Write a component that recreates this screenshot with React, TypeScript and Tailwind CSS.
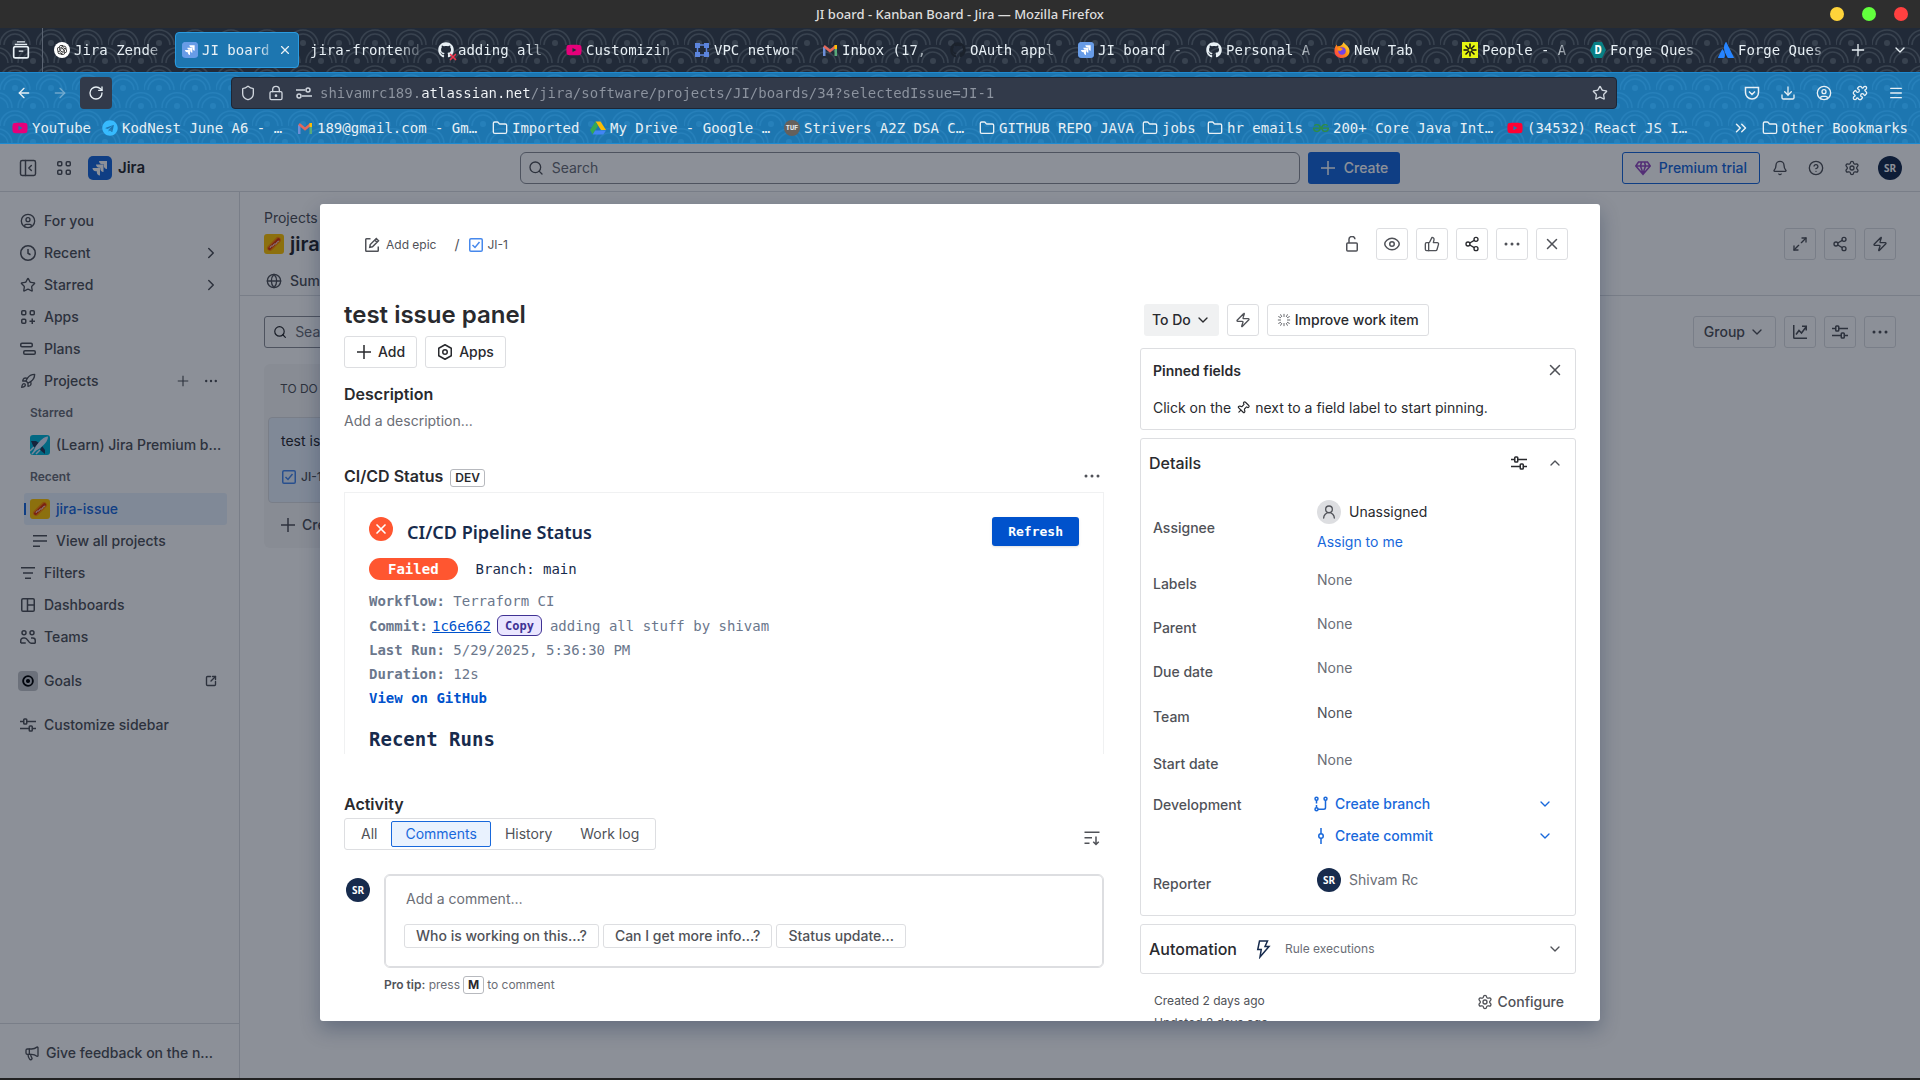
import React from 'react';
import {
  ArrowLeft, ArrowRight, Bell, ChevronDown, ChevronRight, ChevronUp, ChevronsRight, CircleHelp, CircleUser,
  Download, Folder, Globe, LockKeyhole, Maximize2, Megaphone, Menu, PanelLeftClose,
  Pin, Puzzle, Rocket, RotateCw, Search, Settings, Share2, Shield, SquareArrowOutUpRight, Star,
  ThumbsUp, UserRound, X, Zap,
} from 'lucide-react';
import { FaAtlassian, FaGithub, FaTelegram, FaYoutube } from 'react-icons/fa';
import { RiOpenaiFill } from 'react-icons/ri';
import { SiGeeksforgeeks } from 'react-icons/si';

/* ---------- Icons ---------- */

const Glyph = ({ className = 'size-4', children }: { className?: string; children: React.ReactNode }) => (
  <svg viewBox="0 0 16 16" className={`shrink-0 ${className}`} fill="none" stroke="currentColor" strokeWidth={1.5} aria-hidden="true">
    {children}
  </svg>
);

const PlusIcon = ({ className = 'size-4' }: { className?: string }) => (
  <Glyph className={className}><path d="M8 1v14M1 8h14" /></Glyph>
);

const DotsIcon = () => (
  <Glyph>
    <g fill="currentColor" stroke="none">
      <circle cx="2" cy="8" r="1.5" />
      <circle cx="8" cy="8" r="1.5" />
      <circle cx="14" cy="8" r="1.5" />
    </g>
  </Glyph>
);

const GridIcon = ({ plus = false }) => (
  <Glyph>
    <rect x="1.75" y="1.75" width="4" height="4" rx="1" />
    <rect x="10.25" y="1.75" width="4" height="4" rx="1" />
    <rect x="1.75" y="10.25" width="4" height="4" rx="1" />
    {plus ? <path d="M12.25 9.5v5.5M9.5 12.25H15" /> : <rect x="10.25" y="10.25" width="4" height="4" rx="1" />}
  </Glyph>
);

const ClockIcon = () => (
  <Glyph>
    <circle cx="8" cy="8" r="7.25" />
    <path d="M8 4v4.25l2.5 1.5" />
  </Glyph>
);

const PlansIcon = () => (
  <Glyph>
    <rect x="0.75" y="2.25" width="11.5" height="3.5" rx="1.25" />
    <rect x="3.75" y="9.75" width="11.5" height="3.5" rx="1.25" />
  </Glyph>
);

const FilterIcon = () => (
  <Glyph><path d="M1 2.75h14M3 8h10M5 13.25h6" /></Glyph>
);

const ListIcon = () => (
  <Glyph><path d="M1 2.75h14M1 8h14M1 13.25h7" /></Glyph>
);

const DashboardIcon = () => (
  <Glyph>
    <rect x="1.75" y="1.75" width="12.5" height="12.5" rx="1.25" />
    <path d="M7.5 1.75v12.5M7.5 8h6.75" />
  </Glyph>
);

const TeamsIcon = () => (
  <Glyph>
    <circle cx="4" cy="3.75" r="2" />
    <circle cx="12" cy="3.75" r="2" />
    <path d="M.75 14v-2.5A2.5 2.5 0 0 1 3.25 9h1.5c3 0 3.5 5.25 6.25 5.25h3a1 1 0 0 0 1.25-1.25v-1.5A2.5 2.5 0 0 0 12.75 9H11M.75 14h5" />
  </Glyph>
);

const CustomizeIcon = () => (
  <Glyph>
    <path d="M0 4.5h3.5M7 4.5h9M0 11.5h9M12.5 11.5H16" />
    <rect x="3.75" y="2" width="3" height="5" rx=".75" />
    <rect x="9.25" y="9" width="3" height="5" rx=".75" />
  </Glyph>
);

const TaskIcon = () => (
  <Glyph className="size-4 text-[#4688ec]">
    <rect x="1.75" y="1.75" width="12.5" height="12.5" rx="1.25" />
    <path d="m4.5 8 2.5 2.5L11.5 5" />
  </Glyph>
);

const EditIcon = () => (
  <Glyph>
    <path d="M6.5 1.75h-4a.75.75 0 0 0-.75.75v11c0 .4.35.75.75.75h11c.4 0 .75-.35.75-.75v-4" />
    <path d="m5.75 10.25.5-2.75 6-6 2.25 2.25-6 6zM10.75 3l2.25 2.25" />
  </Glyph>
);

const UnlockIcon = () => (
  <Glyph>
    <rect x="2.75" y="7" width="10.5" height="8" rx="1" />
    <path d="M5 7V3.75a3 3 0 0 1 6-.5" />
  </Glyph>
);

const WatchIcon = () => (
  <Glyph>
    <path d="M8 2.25c4 0 7.25 3.5 7.25 5.75S12 13.75 8 13.75.75 10.25.75 8 4 2.25 8 2.25Z" />
    <circle cx="8" cy="8" r="2.25" />
  </Glyph>
);

const ChartIcon = () => (
  <Glyph><path d="M1.75 1v12.5c0 .4.35.75.75.75H15M4 10.5l3-4 2.5 2.5L14 3M10 2.25h4.25V6.5" /></Glyph>
);

const SparkleIcon = () => (
  <Glyph className="size-3.5 text-[#505258]">
    <path d="M8 1v3.5M8 11.5V15M1 8h3.500M11.500 8H15M4 1.500l1.500 3M12 1.500l-1.500 3M4 14.500l1.500-3M12 14.500l-1.500-3M1.500 4l3 1.500M14.500 4l-3 1.500M1.500 12l3-1.500M14.500 12l-3-1.500" strokeWidth="1" />
  </Glyph>
);

const SortIcon = () => (
  <Glyph><path d="M.5 2.25h15M.5 7.75h7.5M.5 13.25h5M12 6.5v8M9.25 11.75 12 14.5l2.75-2.75" /></Glyph>
);

const BranchIcon = () => (
  <Glyph>
    <circle cx="3.5" cy="2.75" r="1.5" />
    <circle cx="12.5" cy="2.75" r="1.5" />
    <circle cx="3.5" cy="13.25" r="1.5" />
    <path d="M3.5 4.25v3.25M3.5 9v2.5M12.5 4.25v7.25c0 1-.75 1.75-1.75 1.75H5" />
  </Glyph>
);

const CommitIcon = () => (
  <Glyph>
    <circle cx="8" cy="8" r="2.25" />
    <path d="M8 0v5.75M8 10.25V16" />
  </Glyph>
);

const AutomationIcon = () => (
  <Glyph className="h-5 w-4 text-[#172b4d]">
    <path d="M4.5 0h8L10 5.5h4L5 16l1.25-7.5H2.75z" />
  </Glyph>
);

const JiraMark = ({ className }: { className: string }) => (
  <svg viewBox="0 0 24 24" className={`shrink-0 ${className}`} aria-hidden="true">
    <rect width="24" height="24" rx="5" fill="#1868db" />
    <path fill="#fff" d="M11 5h8v8c-1.900 0-3.200-1.400-3.200-3.200V8.200h-1.600C12.400 8.200 11 6.900 11 5Z" />
    <path fill="#fff" d="M8 8.500h7.500v7.500c-1.900 0-3.200-1.400-3.200-3.200v-1.100h-1.100C9.400 11.700 8 10.400 8 8.500Z" />
    <path fill="#fff" d="M4.500 12H12v7.500c-1.900 0-3.200-1.400-3.200-3.200v-1.100H7.700c-1.800 0-3.200-1.300-3.200-3.200Z" />
  </svg>
);

const TabJiraMark = () => (
  <span className="size-4 shrink-0 rounded bg-white">
    <JiraMark className="size-4 opacity-65" />
  </span>
);

const HotdogAvatar = () => (
  <svg viewBox="0 0 20 20" className="size-5 shrink-0" aria-hidden="true">
    <rect width="20" height="20" rx="3" fill="#ffc400" />
    <path d="M6 14 14 6" stroke="#ff8b00" strokeWidth="6" strokeLinecap="round" />
    <path d="M5.500 14.500 14.500 5.500" stroke="#de350b" strokeWidth="3" strokeLinecap="round" />
    <path d="m6 14 1-2 2 0 1-2 2 0 1-2 2-1" stroke="#fff" strokeWidth=".8" fill="none" />
  </svg>
);

const RocketAvatar = () => (
  <svg viewBox="0 0 20 20" className="size-5 shrink-0" aria-hidden="true">
    <rect width="20" height="20" rx="3" fill="#00b8d9" />
    <path d="M1 6h5l3 2-5 5zM12 11l3 4v4l-5-4z" fill="#253858" />
    <path d="M18 1.500c-4 0-8 4-12 9.500l-3 6 6-3c5-4 9-8 9-12.500Z" fill="#deebff" />
    <path d="M2 19 11 9M0 16l4-4M6 19l4-4" stroke="#deebff" strokeWidth="1.500" />
  </svg>
);

const GmailIcon = () => (
  <svg viewBox="0 0 16 16" className="size-4 shrink-0" fill="none" strokeWidth="2.500" aria-hidden="true">
    <path d="M2.250 14V5" stroke="#6c8fd8" />
    <path d="M13.750 14V5" stroke="#58a97a" />
    <path d="m2 4 6 5 6-5" stroke="#e2685c" />
    <path d="M13.750 7V3" stroke="#fbbc04" />
  </svg>
);

const DriveIcon = () => (
  <svg viewBox="0 0 16 16" className="size-4 shrink-0" aria-hidden="true">
    <path d="M5.500 1.500h5L16 10h-5z" fill="#fbbc04" />
    <path d="M5.500 1.500 8 6 2.700 14.500 0 10z" fill="#34a853" />
    <path d="M5.200 10.500H16L13.300 14.500H2.700z" fill="#4285f4" />
  </svg>
);

const VpcIcon = () => (
  <svg viewBox="0 0 16 16" className="size-4 shrink-0" fill="#5c85de" aria-hidden="true">
    <path d="M1 1h5v5H1zM10 1h5v5h-5zM1 10h5v5H1zM10 10h5v5h-5z" />
    <path d="M6 3h4M6 13h4M3.500 6v4M12.500 6v4" stroke="#5c85de" strokeWidth="1.500" />
  </svg>
);

const PeopleIcon = () => (
  <svg viewBox="0 0 16 16" className="size-4 shrink-0" aria-hidden="true">
    <rect width="16" height="16" fill="#e6f512" />
    <path d="M8 1.500v13M1.500 8h13M3.500 3.500l9 9M12.500 3.500l-9 9" stroke="#111" strokeWidth="1.500" />
    <circle cx="8" cy="8" r="1.500" fill="#e6f512" />
  </svg>
);

const FirefoxIcon = () => (
  <svg viewBox="0 0 16 16" className="size-4 shrink-0" aria-hidden="true">
    <defs>
      <linearGradient id="fox" x1="1" y1="0" x2="0" y2="1">
        <stop offset="0" stopColor="#fff44f" />
        <stop offset=".45" stopColor="#ff980e" />
        <stop offset="1" stopColor="#ff2a55" />
      </linearGradient>
    </defs>
    <path d="M9.500 0c.5 2 4 3 5.500 6.500C17 12 13 16 8 16S0 12.500.5 8C.7 5.500 1.500 4 2.500 2.500L3.500 4.500C5 4 8 4.500 9.500 0Z" fill="url(#fox)" />
    <circle cx="8" cy="9" r="3.750" fill="#7542e5" />
    <path d="M3.500 6.500c2-1.500 4 0 5.500.5L6.500 9 4 8.500z" fill="#ff980e" />
  </svg>
);

const ForgeIcon = () => (
  <span className="flex size-4 shrink-0 items-center justify-center bg-[#088085] text-xs font-bold text-white [clip-path:polygon(25%_0,75%_0,100%_50%,75%_100%,25%_100%,0_50%)]">D</span>
);

const FailedGithub = () => (
  <span className="relative shrink-0">
    <FaGithub className="size-4" />
    <X className="absolute -right-1 -bottom-1 size-2.5 text-[#f0364d]" strokeWidth={4} />
  </span>
);

const OpenAi = () => (
  <span className="flex size-4 shrink-0 items-center justify-center rounded-full bg-white text-black">
    <RiOpenaiFill className="size-3" />
  </span>
);

// Overlapping wave arcs painted behind the browser toolbar
const Waves = ({ id, className }: { id: string; className: string }) => (
  <svg className={`pointer-events-none absolute inset-0 size-full ${className}`} aria-hidden="true">
    <defs>
      <pattern id={id} width="36" height="36" patternUnits="userSpaceOnUse">
        <g fill="none" stroke="currentColor" strokeWidth="1.500">
          <path d="M0 17a15 15 0 0 1 30 0M4 17a11 11 0 0 1 22 0" />
          <path d="M18 35a15 15 0 0 1 18-15M22 35a11 11 0 0 1 14-10.500M0 20a15 15 0 0 1 12 15M0 24.500a11 11 0 0 1 8 10.500" />
        </g>
        <circle cx="15" cy="15" r="3" fill="currentColor" />
        <circle cx="33" cy="33" r="3" fill="currentColor" />
      </pattern>
    </defs>
    <rect width="100%" height="100%" fill={`url(#${id})`} />
  </svg>
);

/* ---------- Browser chrome ---------- */

const tabs = [
  { title: 'Jira Zende', icon: <OpenAi /> },
  { title: 'JI board', icon: <TabJiraMark />, active: true },
  { title: 'jira-frontend', icon: null },
  { title: 'adding all', icon: <FailedGithub /> },
  { title: 'Customizin', icon: <FaYoutube className="size-4 shrink-0 text-[#e6007a]" /> },
  { title: 'VPC networ', icon: <VpcIcon /> },
  { title: 'Inbox (17,', icon: <GmailIcon /> },
  { title: 'OAuth appl', icon: <FaGithub className="size-4 shrink-0 text-[#1b222c]" /> },
  { title: 'JI board -', icon: <TabJiraMark /> },
  { title: 'Personal A', icon: <FaGithub className="size-4 shrink-0" /> },
  { title: 'New Tab', icon: <FirefoxIcon /> },
  { title: 'People - A', icon: <PeopleIcon /> },
  { title: 'Forge Ques', icon: <ForgeIcon /> },
  { title: 'Forge Ques', icon: <FaAtlassian className="size-4 shrink-0 text-[#2684ff]" /> },
];

const bookmarks = [
  { title: 'YouTube', width: 'w-[90px]', icon: <FaYoutube className="size-4 shrink-0 text-[#e6007a]" /> },
  { title: 'KodNest June A6 - …', width: 'w-[195px]', icon: <FaTelegram className="size-4 shrink-0 text-[#37bbfe]" /> },
  { title: '189@gmail.com - Gm…', width: 'w-[195px]', icon: <GmailIcon /> },
  { title: 'Imported', width: 'w-[98px]', icon: <Folder className="size-4 shrink-0" /> },
  { title: 'My Drive - Google …', width: 'w-[194px]', icon: <DriveIcon /> },
  { title: 'Strivers A2Z DSA C…', width: 'w-[195px]', icon: <span className="flex size-4 shrink-0 items-center justify-center rounded-full bg-[#66605c] text-[7px] font-bold">TUF</span> },
  { title: 'GITHUB REPO JAVA', width: 'w-[163px]', icon: <Folder className="size-4 shrink-0" /> },
  { title: 'jobs', width: 'w-[65px]', icon: <Folder className="size-4 shrink-0" /> },
  { title: 'hr emails', width: 'w-[106px]', icon: <Folder className="size-4 shrink-0" /> },
  { title: '200+ Core Java Int…', width: 'w-[194px]', icon: <SiGeeksforgeeks className="size-4 shrink-0 text-[#2f8d46]" /> },
  { title: '(34532) React JS I…', width: 'w-[195px]', icon: <FaYoutube className="size-4 shrink-0 text-[#ff0033]" /> },
];

const BrowserChrome = () => (
  <header className="shrink-0 font-['DejaVu_Sans_Mono',monospace] text-sm text-[#e8f0f5]">
    {/* Title bar */}
    <div className="flex h-7 items-center bg-[#2e2e2e] px-3 font-['Noto_Sans',sans-serif] text-[13px] font-medium text-[#dedede]">
      <div className="flex-1" />
      <span>JI board - Kanban Board - Jira — Mozilla Firefox</span>
      <div className="flex flex-1 justify-end gap-[18px]">
        <button aria-label="Minimize" className="size-3.5 rounded-full bg-[#ffd43a]" />
        <button aria-label="Maximize" className="size-3.5 rounded-full bg-[#62ff3d]" />
        <button aria-label="Close window" className="size-3.5 rounded-full bg-[#ff4040]" />
      </div>
    </div>

    {/* Tabs */}
    <div className="relative flex h-11 items-center bg-[#212a38]">
      <Waves id="waves-tabs" className="text-[#38424f]" />
      <button aria-label="Tab history" className="relative flex h-full w-[43px] shrink-0 items-center justify-center border-r border-[#5b6472]">
        <Glyph className="size-[18px]">
          <rect x="1.500" y="5" width="13" height="10" rx="1.500" />
          <path d="M2.500 3h11M4.500 .75h7M6 9h4" strokeWidth="1.250" />
        </Glyph>
      </button>
      <div className="relative ml-1 flex min-w-0">
        {tabs.map((tab, i) => (
          <div
            key={i}
            className={`mr-1 flex h-9 w-[124px] min-w-0 items-center gap-1 rounded-sm border px-1.5 ${tab.active ? 'border-[#2a9be0] bg-[#1d76b0]' : 'border-transparent'}`}
          >
            {tab.icon}
            <span className="flex-1 whitespace-nowrap [mask-image:linear-gradient(to_right,black_80%,transparent_105%)]">{tab.title}</span>
            {tab.active && <button aria-label="Close tab"><X className="size-3.5" /></button>}
          </div>
        ))}
      </div>
      <button aria-label="New tab" className="relative ml-3"><PlusIcon className="size-3.5" /></button>
      <button aria-label="List all tabs" className="relative mr-3 ml-auto"><ChevronDown className="size-4" /></button>
    </div>

    {/* Navigation and bookmarks */}
    <div className="relative h-[72px] border-y border-[#1e8ad0] bg-[#1d76b0]">
      <Waves id="waves-nav" className="text-[#2680ba]" />
      <div className="relative flex h-10 items-center pr-4">
        <button aria-label="Back" className="ml-4"><ArrowLeft className="size-4" /></button>
        <button aria-label="Forward" className="ml-5 opacity-40"><ArrowRight className="size-4" /></button>
        <button aria-label="Reload" className="ml-3 flex size-8 items-center justify-center rounded-sm bg-[#323a4a]"><RotateCw className="size-4" /></button>
        <div className="ml-[119px] flex h-8 flex-1 items-center gap-3 rounded-sm border border-[#1c2636] bg-[#323a4a] px-2 text-[#d0d6de]">
          <Shield className="size-4" />
          <LockKeyhole className="size-4" />
          <Glyph>
            <path d="M0 5h9M6 11h10" />
            <circle cx="12" cy="5" r="2" />
            <circle cx="3" cy="11" r="2" />
          </Glyph>
          <input
            aria-label="Address"
            className="-ml-1 min-w-0 flex-1 bg-[linear-gradient(to_right,#8d94a0_12ch,#f4f7fa_12ch,#f4f7fa_25ch,#8d94a0_25ch)] bg-clip-text text-transparent outline-none"
            defaultValue="shivamrc189.atlassian.net/jira/software/projects/JI/boards/34?selectedIssue=JI-1"
          />
          <Star className="size-4" />
        </div>
        <div className="ml-[127px] flex gap-5">
          <button aria-label="Save to Pocket">
            <Glyph><path d="M1.500 2.500h13v5a6.500 6.500 0 0 1-13 0zM5 6.500l3 3 3-3" /></Glyph>
          </button>
          <button aria-label="Downloads"><Download className="size-4" /></button>
          <button aria-label="Account"><CircleUser className="size-4" /></button>
          <button aria-label="Extensions"><Puzzle className="size-4" /></button>
          <button aria-label="Application menu"><Menu className="size-4" /></button>
        </div>
      </div>
      <nav aria-label="Bookmarks" className="relative flex h-[30px] items-center pr-3 pl-3">
        {bookmarks.map((b) => (
          <a key={b.title} href="#" className={`flex shrink-0 items-center gap-1 whitespace-nowrap ${b.width}`}>
            {b.icon}
            {b.title}
          </a>
        ))}
        <button aria-label="More bookmarks" className="ml-auto"><ChevronsRight className="size-[18px]" /></button>
        <a href="#" className="ml-3 flex items-center gap-1 whitespace-nowrap">
          <Folder className="size-4" />
          Other Bookmarks
        </a>
      </nav>
    </div>
  </header>
);

/* ---------- Jira page ---------- */

const IconButton = ({ label, children }: { label: string; children: React.ReactNode }) => (
  <button aria-label={label} className="flex size-8 shrink-0 items-center justify-center rounded-[3px] border border-[#dddee1] text-[#505258]">
    {children}
  </button>
);

const Avatar = ({ className = 'size-6' }: { className?: string }) => (
  <span className={`flex shrink-0 items-center justify-center rounded-full bg-[#172b4d] font-['Noto_Sans',sans-serif] text-[10px] font-bold text-white ${className}`}>SR</span>
);

const TopBar = () => (
  <div className="flex h-12 shrink-0 items-center border-b border-[#dddee1] px-[18px]">
    <div className="flex flex-1 items-center">
      <button aria-label="Collapse sidebar" className="text-[#505258]"><PanelLeftClose className="size-5" strokeWidth={1.75} /></button>
      <button aria-label="Switch apps" className="ml-[18px] text-[#505258]"><GridIcon /></button>
      <JiraMark className="ml-4 size-6" />
      <span className="ml-1.5 text-[15px] leading-5 font-semibold">Jira</span>
    </div>
    <label className="flex h-8 w-[780px] items-center gap-2 rounded-md border border-[#8c8f97] px-[7px] text-[#505258]">
      <Search className="size-4" />
      <input aria-label="Search" placeholder="Search" className="flex-1 outline-none placeholder:text-[#6b6e76]" />
    </label>
    <button className="ml-2 flex h-8 items-center gap-2 rounded-[3px] bg-[#1868db] px-3 font-medium text-white">
      <PlusIcon />
      Create
    </button>
    <div className="flex flex-1 items-center justify-end">
      <button className="flex h-8 items-center gap-2 rounded-[3px] border border-[#1868db] px-3 font-medium text-[#1868db]">
        <svg viewBox="0 0 16 16" className="size-4" fill="none" stroke="#964ac0" strokeWidth="1.500" aria-hidden="true">
          <path d="M3.500 2h9L15.250 6 8 14.250.75 6zM1 6h14M5.500 6 8 13.500 10.500 6M5.500 6 6.500 2M10.500 6l-1-4" />
        </svg>
        Premium trial
      </button>
      <div className="ml-3 flex items-center gap-5 text-[#505258]">
        <button aria-label="Notifications"><Bell className="size-4" /></button>
        <button aria-label="Help"><CircleHelp className="size-4" /></button>
        <button aria-label="Settings"><Settings className="size-4" /></button>
      </div>
      <Avatar className="ml-[18px] size-6" />
    </div>
  </div>
);

const NavItem = ({ icon, label, children }: { icon: React.ReactNode; label: string; children?: React.ReactNode }) => (
  <div className="flex h-8 items-center px-5">
    <a href="#" className="flex flex-1 items-center gap-2">
      <span className="flex w-4 justify-center">{icon}</span>
      {label}
    </a>
    {children}
  </div>
);

const Sidebar = () => (
  <nav aria-label="Sidebar" className="flex w-60 shrink-0 flex-col border-r border-[#dddee1] font-medium text-[#505258]">
    <div className="flex-1 overflow-hidden pt-[13px]">
      <NavItem icon={<CircleUser className="size-[18px]" />} label="For you" />
      <NavItem icon={<ClockIcon />} label="Recent"><ChevronRight className="-mr-px size-[18px]" /></NavItem>
      <NavItem icon={<Star className="size-4" />} label="Starred"><ChevronRight className="-mr-px size-[18px]" /></NavItem>
      <NavItem icon={<GridIcon plus />} label="Apps" />
      <NavItem icon={<PlansIcon />} label="Plans" />
      <NavItem icon={<Rocket className="size-4" />} label="Projects">
        <button aria-label="Create project"><PlusIcon className="size-3" /></button>
        <button aria-label="More project actions" className="ml-3.5 scale-80"><DotsIcon /></button>
      </NavItem>
      <h3 className="h-8 pl-[30px] text-xs leading-8 font-semibold text-[#6b6e76]">Starred</h3>
      <a href="#" className="flex h-8 items-center gap-1.5 pr-3 pl-[30px]">
        <RocketAvatar />
        <span className="truncate">(Learn) Jira Premium benefits</span>
      </a>
      <h3 className="h-8 pl-[30px] text-xs leading-8 font-semibold text-[#6b6e76]">Recent</h3>
      <a href="#" className="mr-3 ml-6 flex h-8 items-center rounded-[3px] bg-[#e9f2fe] text-[#1868db]">
        <span className="mr-1 h-3 w-0.5 bg-[#1868db]" />
        <HotdogAvatar />
        <span className="ml-1.5">jira-issue</span>
      </a>
      <a href="#" className="flex h-8 items-center gap-2 pl-8"><ListIcon />View all projects</a>
      <NavItem icon={<FilterIcon />} label="Filters" />
      <NavItem icon={<DashboardIcon />} label="Dashboards" />
      <NavItem icon={<TeamsIcon />} label="Teams" />
      <div className="pt-3">
        <NavItem
          icon={
            <span className="-mx-0.5 flex size-5 shrink-0 items-center justify-center rounded bg-[#c4c6ca] text-black">
              <Glyph className="size-3"><circle cx="8" cy="8" r="6.500" strokeWidth="2.500" /><circle cx="8" cy="8" r="2" fill="currentColor" /></Glyph>
            </span>
          }
          label="Goals"
        >
          <SquareArrowOutUpRight className="mr-0.5 size-3" strokeWidth={2.75} />
        </NavItem>
      </div>
      <div className="pt-3">
        <NavItem icon={<CustomizeIcon />} label="Customize sidebar" />
      </div>
    </div>
    <a href="#" className="flex h-[55px] items-center gap-1.5 border-t border-[#dddee1] px-6 pt-1">
      <Megaphone className="size-4 shrink-0" />
      <span className="truncate">Give feedback on the new navigation</span>
    </a>
  </nav>
);

const Board = () => (
  <main className="min-w-0 flex-1 text-[#505258]">
    <div className="flex h-[104px] flex-col border-b border-[#dddee1] px-6 pt-4">
      <span>Projects</span>
      <div className="flex h-8 items-center gap-1.5">
        <HotdogAvatar />
        <h2 className="flex-1 text-xl font-semibold text-[#292a2e]">jira-issue</h2>
        <div className="flex gap-2">
          <IconButton label="Full screen"><Maximize2 className="size-4" /></IconButton>
          <IconButton label="Share"><Share2 className="size-4" /></IconButton>
          <IconButton label="Automation"><Zap className="size-4" /></IconButton>
        </div>
      </div>
      <a href="#" className="mt-[11px] flex items-center gap-2 pl-0.5 font-medium"><Globe className="size-4" />Summary</a>
    </div>
    <div className="flex items-center justify-between px-6 pt-5">
      <label className="flex h-8 w-52 items-center gap-2 rounded-[3px] border border-[#8c8f97] px-2 text-[#292a2e]">
        <Search className="size-4" />
        <input aria-label="Search board" placeholder="Search board" className="w-full outline-none placeholder:text-[#6b6e76]" />
      </label>
      <div className="flex gap-2">
        <button className="flex h-8 items-center gap-1 rounded-[3px] border border-[#dddee1] px-2.5 font-medium">Group <ChevronDown className="size-4" /></button>
        <IconButton label="Insights"><ChartIcon /></IconButton>
        <IconButton label="View settings"><CustomizeIcon /></IconButton>
        <IconButton label="More"><DotsIcon /></IconButton>
      </div>
    </div>
    <section className="mt-4 ml-6 h-[184px] w-[270px] rounded-md bg-[#f8f8f8] px-1">
      <h3 className="pl-3 text-xs leading-[50px]">TO DO</h3>
      <div className="mt-[3px] h-[86px] rounded border border-[#dddee1] bg-[#e9f2fe] px-3 pt-[13px]">
        <p className="text-[#292a2e]">test issue panel</p>
        <p className="mt-4 flex items-center gap-1 text-xs leading-5 font-medium"><TaskIcon />JI-1</p>
      </div>
      <button className="mt-3 flex items-center gap-1.5 pl-3 font-medium"><PlusIcon />Create</button>
    </section>
  </main>
);

/* ---------- Issue dialog ---------- */

const PipelineCard = () => (
  <div className="h-[262px] overflow-hidden border border-b-0 border-[#f0f1f2] px-6 pt-6 font-['DejaVu_Sans_Mono',monospace] text-[#6b778c]">
    <div className="flex h-[30px] items-start">
      <span className="flex size-6 items-center justify-center rounded-full bg-[#ff5630] text-white"><X className="size-4" strokeWidth={2.500} /></span>
      <h2 className="ml-3.5 flex-1 font-['Noto_Sans',sans-serif] text-lg leading-[30px] font-semibold text-[#172b4d]">CI/CD Pipeline Status</h2>
      <button className="h-[29px] rounded-[3px] bg-[#0052cc] px-4 text-[13px] font-bold text-white shadow-sm">Refresh</button>
    </div>
    <div className="mt-[11px] flex items-center gap-[18px] text-[#172b4d]">
      <span className="h-[22px] rounded-full bg-[#ff5630] px-[19px] text-sm leading-[22px] font-bold text-white">Failed</span>
      <span>Branch: main</span>
    </div>
    <div className="mt-[9px] leading-6">
      <p><strong>Workflow:</strong> Terraform CI</p>
      <p className="flex h-[25px] items-center">
        <strong>Commit:</strong>
        <a href="#" className="ml-1 text-[#0052cc] underline">1c6e662</a>
        <button className="mr-2 ml-1.5 h-[21px] rounded-md border border-[#403294] bg-[#eae6ff] px-[7px] text-xs font-bold text-[#403294]">Copy</button>
        adding all stuff by shivam
      </p>
      <p><strong>Last Run:</strong> 5/29/2025, 5:36:30 PM</p>
      <p><strong>Duration:</strong> 12s</p>
      <a href="#" className="block font-bold text-[#0052cc]">View on GitHub</a>
    </div>
    <h3 className="mt-[15px] text-[19px] leading-7 font-bold text-[#172b4d]">Recent Runs</h3>
  </div>
);

const activityTabs = ['All', 'Comments', 'History', 'Work log'];
const quickReplies = ['Who is working on this...?', 'Can I get more info...?', 'Status update...'];

const Activity = () => (
  <section className="mt-[38px]">
    <h2 className="text-base leading-6 font-semibold">Activity</h2>
    <div className="mt-0.5 flex items-center justify-between">
      <div className="flex h-8 items-center rounded-[3px] border border-[#dddee1] px-0.5 text-[#505258]">
        {activityTabs.map((tab) => (
          <button
            key={tab}
            className={`h-[26px] rounded-xs border px-[13px] ${tab === 'Comments' ? 'border-[#1868db] bg-[#e9f2fe] text-[#1868db]' : 'border-transparent'}`}
          >
            {tab}
          </button>
        ))}
      </div>
      <button aria-label="Sort comments" className="mt-2 mr-1 text-[#505258]"><SortIcon /></button>
    </div>
    <div className="mt-6 flex gap-3.5 pl-0.5">
      <Avatar className="mt-1 size-6" />
      <div className="flex-1">
        <div className="h-[94px] rounded-md border border-[#dddee1] px-[19px] pt-3.5 ring-1 ring-[#dddee1] ring-inset">
          <input aria-label="Comment" placeholder="Add a comment…" className="block w-full pl-0.5 leading-5 outline-none placeholder:text-[#6b6e76]" />
          <div className="mt-[15px] flex gap-1 font-medium text-[#505258]">
            {quickReplies.map((reply) => (
              <button key={reply} className="h-6 rounded-[3px] border border-[#dddee1] px-[11px]">{reply}</button>
            ))}
          </div>
        </div>
        <p className="mt-2 flex h-[18px] items-center gap-[3px] text-xs text-[#6b6e76]">
          <span><strong className="font-semibold text-[#505258]">Pro tip:</strong> press</span>
          <kbd className="h-[18px] rounded-[3px] border border-[#b7b9be] px-1 font-['Inter',sans-serif] text-xs leading-4 font-bold text-[#292a2e]">M</kbd>
          to comment
        </p>
      </div>
    </div>
  </section>
);

const Field = ({ label, height = 'h-11', children }: { label: string; height?: string; children: React.ReactNode }) => (
  <div className={`flex items-center ${height}`}>
    <dt className="w-[164px] shrink-0 font-medium text-[#505258]">{label}</dt>
    <dd className="flex-1 pb-2 text-[#6b6e76]">{children}</dd>
  </div>
);

const DetailsPanel = () => (
  <section className="mt-2 rounded-[3px] border border-[#dddee1] pb-[9px]">
    <div className="flex h-12 items-center pr-3 pl-2">
      <h2 className="flex-1 text-base font-medium">Details</h2>
      <button aria-label="Configure fields" className="mr-5"><CustomizeIcon /></button>
      <button aria-label="Collapse details" className="text-[#505258]"><ChevronUp className="size-4" /></button>
    </div>
    <dl className="mt-[7px] px-3">
      <div className="flex h-[68px] items-center">
        <dt className="w-[164px] font-medium text-[#505258]">Assignee</dt>
        <dd className="pb-1">
          <span className="flex items-center gap-2">
            <span className="flex size-6 items-center justify-center rounded-full bg-[#dddee1] text-[#505258]"><UserRound className="size-4" /></span>
            Unassigned
          </span>
          <a href="#" className="mt-2 block text-[#1868db]">Assign to me</a>
        </dd>
      </div>
      <Field label="Labels">None</Field>
      <Field label="Parent">None</Field>
      <Field label="Due date">None</Field>
      <Field label="Team" height="h-[46px]"><span className="text-[#505258]">None</span></Field>
      <Field label="Start date" height="h-[47px]">None</Field>
      <div className="flex leading-8">
        <dt className="w-40 pt-0.5 font-medium text-[#505258]">Development</dt>
        <dd className="flex-1 pt-px pr-2.5 font-medium text-[#1868db]">
          <a href="#" className="flex items-center gap-1.5"><BranchIcon /><span className="flex-1">Create branch</span><ChevronDown className="size-4" /></a>
          <a href="#" className="flex items-center gap-1.5"><CommitIcon /><span className="flex-1">Create commit</span><ChevronDown className="size-4" /></a>
        </dd>
      </div>
      <div className="pt-2.5">
        <Field label="Reporter">
          <span className="flex items-center gap-2"><Avatar />Shivam Rc</span>
        </Field>
      </div>
    </dl>
  </section>
);

const IssueDialog = () => (
  <div role="dialog" aria-label="test issue panel" className="flex h-full w-2/3 flex-col overflow-hidden rounded-[3px] bg-white shadow-[0_8px_20px_rgba(9,30,66,0.3)]">
    <div className="flex h-[97px] shrink-0 items-start pt-6 pr-8 pl-11">
      <div className="flex h-[34px] flex-1 items-center text-xs text-[#505258]">
        <button className="flex items-center gap-1.5"><EditIcon />Add epic</button>
        <span className="mr-2 ml-[18px] text-sm">/</span>
        <a href="#" className="flex items-center gap-1"><TaskIcon />JI-1</a>
      </div>
      <div className="flex items-center gap-2">
        <button aria-label="Restrictions" className="flex size-8 items-center justify-center text-[#505258]"><UnlockIcon /></button>
        <IconButton label="Watch"><WatchIcon /></IconButton>
        <IconButton label="Vote"><ThumbsUp className="size-4" /></IconButton>
        <IconButton label="Share"><Share2 className="size-4 text-[#292a2e]" /></IconButton>
        <IconButton label="Actions"><DotsIcon /></IconButton>
        <IconButton label="Close"><X className="size-[18px]" /></IconButton>
      </div>
    </div>

    <div className="flex min-h-0 flex-1 gap-9 px-6">
      {/* Left column */}
      <div className="min-w-0 flex-1">
        <h1 className="text-2xl leading-7 font-semibold">test issue panel</h1>
        <div className="mt-[7px] flex gap-2">
          <button className="flex h-8 items-center gap-1.5 rounded-[3px] border border-[#dddee1] px-[11px] font-medium"><PlusIcon />Add</button>
          <button className="flex h-8 items-center gap-1.5 rounded-[3px] border border-[#dddee1] px-[11px] font-medium">
            <Glyph>
              <path d="M8 .75 14.250 4.250v7.500L8 15.250 1.750 11.750v-7.500z" strokeLinejoin="round" />
              <circle cx="8" cy="8" r="2.250" />
            </Glyph>
            Apps
          </button>
        </div>
        <h2 className="mt-3.5 text-base leading-6 font-semibold">Description</h2>
        <p className="mt-[5px] text-[#6b6e76]">Add a description...</p>
        <div className="mt-7 flex h-[33px] items-center gap-[7px]">
          <h2 className="text-base leading-6 font-semibold">CI/CD Status</h2>
          <span className="mt-1 h-[18px] rounded-[3px] border border-[#b7b9be] px-1 text-xs leading-4 font-semibold">DEV</span>
          <button aria-label="Panel actions" className="mr-1 ml-auto text-[#505258]"><DotsIcon /></button>
        </div>
        <PipelineCard />
        <Activity />
      </div>

      {/* Right column */}
      <div className="w-[436px] shrink-0 pt-[3px]">
        <div className="flex gap-2 pl-1">
          <button className="flex h-8 items-center gap-1 rounded-[3px] bg-[#f0f1f2] px-2 font-medium">To Do <ChevronDown className="size-4" /></button>
          <IconButton label="Run automation"><Zap className="size-4" /></IconButton>
          <button className="flex h-8 items-center gap-1 rounded-[3px] border border-[#dddee1] px-[9px] font-medium"><SparkleIcon />Improve work item</button>
        </div>
        <section className="mt-3 h-[82px] rounded-[3px] border border-[#dddee1] px-3 pt-3">
          <div className="flex items-start justify-between">
            <h2 className="font-semibold">Pinned fields</h2>
            <button aria-label="Dismiss" className="-mr-px text-[#505258]"><X className="size-[18px]" /></button>
          </div>
          <p className="mt-[17px] flex items-center">
            Click on the <Pin className="mx-[5px] size-3.5 rotate-45" /> next to a field label to start pinning.
          </p>
        </section>
        <DetailsPanel />
        <section className="mt-2 flex h-[50px] items-center rounded-[3px] border border-[#dddee1] pr-3 pl-2">
          <h2 className="text-base font-medium">Automation</h2>
          <span className="mr-3.5 ml-[18px]"><AutomationIcon /></span>
          <span className="flex-1 text-xs text-[#6b6e76]">Rule executions</span>
          <button aria-label="Expand automation" className="text-[#505258]"><ChevronDown className="size-4" /></button>
        </section>
        <div className="flex items-start justify-between pt-4 pr-3 pl-3.5 text-[#505258]">
          <div className="text-xs leading-[22px]">
            <p>Created 2 days ago</p>
            <p>Updated 2 days ago</p>
          </div>
          <button className="mt-0.5 flex items-center gap-1 font-medium"><Settings className="size-4" />Configure</button>
        </div>
      </div>
    </div>
  </div>
);

const App: React.FC = () => (
  <div className="flex h-screen flex-col overflow-hidden border-b-2 border-[#222222] bg-white font-['Inter',sans-serif] text-sm leading-5 text-[#292a2e]">
    <BrowserChrome />
    <div className="relative flex min-h-0 flex-1 flex-col">
      <TopBar />
      <div className="flex min-h-0 flex-1">
        <Sidebar />
        <Board />
      </div>
      <div className="absolute inset-0 flex justify-center bg-[#050c1f]/46 pt-[60px] pb-[57px]">
        <IssueDialog />
      </div>
    </div>
  </div>
);

export default App;
